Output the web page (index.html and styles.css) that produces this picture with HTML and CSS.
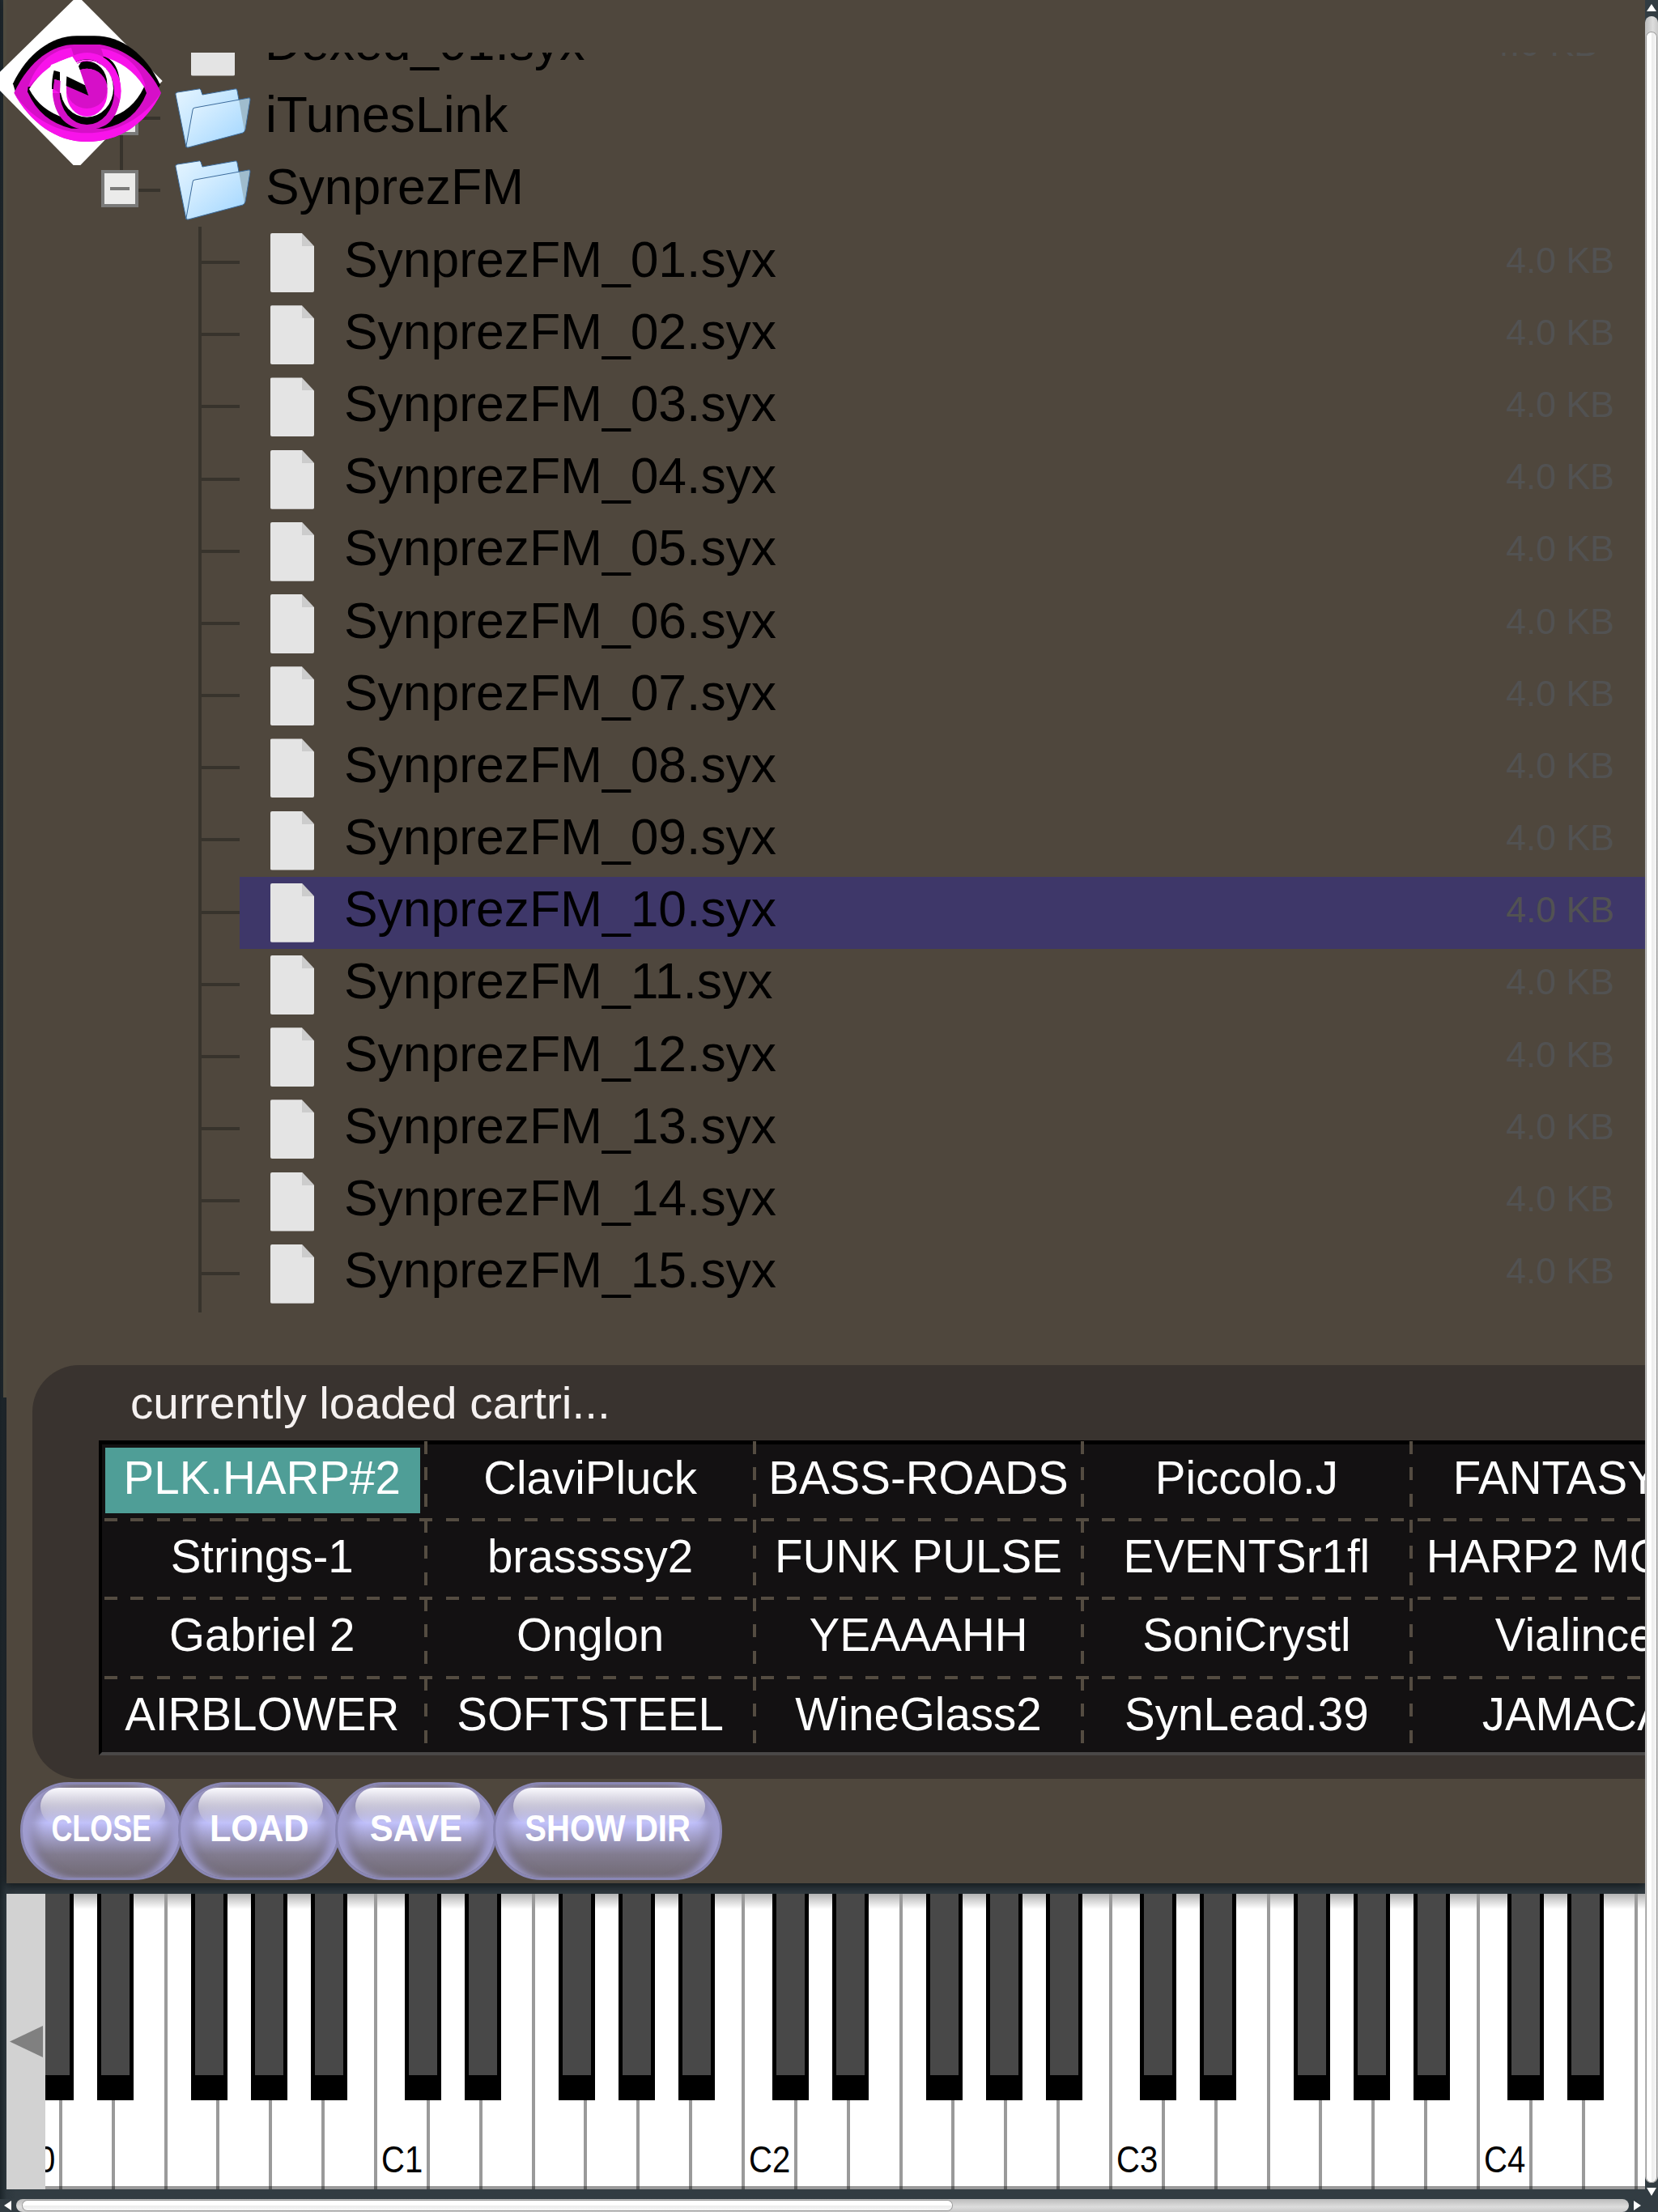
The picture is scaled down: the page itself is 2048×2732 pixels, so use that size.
FILE: index.html
```
<!doctype html>
<html>
<head>
<meta charset="utf-8">
<title>Synprez</title>
<link rel="stylesheet" href="styles.css">
</head>

<body>
<svg width="0" height="0" class="defs">
	<defs>
		<linearGradient id="back" x1="0" y1="0" x2="1" y2="1">
			<stop offset="0" stop-color="#e6f5ff"/><stop offset="1" stop-color="#9fd5ff"/>
		</linearGradient>
		<symbol id="folder" viewBox="0 0 94 74">
			<path d="M1 8Q0 6 3 5L29 1Q31 0 32 2L34 8L74 1Q77 0 77 3L79 14L14 73Z" fill="url(#back)" stroke="#3d6c9c"/>
			<path d="M14 73L22 27Q22 24 25 24L91 12Q93 11 93 14L87 51Q86 54 84 55L17 73Q14 74 14 71Z" fill="#9fbccd"/>
			<path d="M14 73L22 27Q22 24 25 24L79 14L86 53L84 55Z" fill="url(#back)"/>
			<path d="M14 71L22 27Q22 24 25 24L91 12Q93 11 93 14L87 51Q86 54 84 55L17 73Q14 74 14 71Z" fill="none" stroke="#3d6c9c"/>
		</symbol>
	</defs>
</svg>

<div class="screen">
	<div class="main">
		<div class="browser">
			<ul class="tree">
				<li class="top"><i class="file"></i><b>Dexed_01.syx</b><em>4.0 KB</em></li>
				<li class="top dir"><i class="box"></i><svg class="folder"><use href="#folder"/></svg><b>iTunesLink</b></li>
				<li class="top dir last"><i class="box"></i><svg class="folder"><use href="#folder"/></svg><b>SynprezFM</b></li>
				<li><i class="file"></i><b>SynprezFM_01.syx</b><em>4.0 KB</em></li>
				<li><i class="file"></i><b>SynprezFM_02.syx</b><em>4.0 KB</em></li>
				<li><i class="file"></i><b>SynprezFM_03.syx</b><em>4.0 KB</em></li>
				<li><i class="file"></i><b>SynprezFM_04.syx</b><em>4.0 KB</em></li>
				<li><i class="file"></i><b>SynprezFM_05.syx</b><em>4.0 KB</em></li>
				<li><i class="file"></i><b>SynprezFM_06.syx</b><em>4.0 KB</em></li>
				<li><i class="file"></i><b>SynprezFM_07.syx</b><em>4.0 KB</em></li>
				<li><i class="file"></i><b>SynprezFM_08.syx</b><em>4.0 KB</em></li>
				<li><i class="file"></i><b>SynprezFM_09.syx</b><em>4.0 KB</em></li>
				<li class="on"><i class="file"></i><b>SynprezFM_10.syx</b><em>4.0 KB</em></li>
				<li><i class="file"></i><b>SynprezFM_11.syx</b><em>4.0 KB</em></li>
				<li><i class="file"></i><b>SynprezFM_12.syx</b><em>4.0 KB</em></li>
				<li><i class="file"></i><b>SynprezFM_13.syx</b><em>4.0 KB</em></li>
				<li><i class="file"></i><b>SynprezFM_14.syx</b><em>4.0 KB</em></li>
				<li class="end"><i class="file"></i><b>SynprezFM_15.syx</b><em>4.0 KB</em></li>
			</ul>

			<div class="cart">
				<h2><span>currently loaded cartri...</span></h2>
				<div class="grid">
					<div class="row"><span class="cur">PLK.HARP#2</span><span>ClaviPluck</span><span>BASS-ROADS</span><span>Piccolo.J</span><span class="cut1">FANTASY</span></div>
					<div class="row"><span>Strings-1</span><span>brassssy2</span><span>FUNK PULSE</span><span>EVENTSr1fl</span><span class="cut2">HARP2 MO</span></div>
					<div class="row"><span>Gabriel 2</span><span>Onglon</span><span>YEAAAHH</span><span>SoniCrystl</span><span>Vialince</span></div>
					<div class="row"><span>AIRBLOWER</span><span>SOFTSTEEL</span><span>WineGlass2</span><span>SynLead.39</span><span>JAMACA</span></div>
				</div>
			</div>

			<div class="buttons">
				<a href="javascript:;" class="btn close"><span>CLOSE</span></a>
				<a href="javascript:;" class="btn"><span>LOAD</span></a>
				<a href="javascript:;" class="btn"><span>SAVE</span></a>
				<a href="javascript:;" class="btn wide"><span>SHOW DIR</span></a>
			</div>
		</div>

		<div class="keyboard">
			<a href="javascript:;" class="down"><i></i></a>
			<div class="keys">
				<div class="strip">
					<div class="key c"><i></i><u>C0</u></div>
					<div class="key d"><i></i></div>
					<div class="key"></div>
					<div class="key f"><i></i></div>
					<div class="key g"><i></i></div>
					<div class="key a"><i></i></div>
					<div class="key"></div>
					<div class="key c"><i></i><u>C1</u></div>
					<div class="key d"><i></i></div>
					<div class="key"></div>
					<div class="key f"><i></i></div>
					<div class="key g"><i></i></div>
					<div class="key a"><i></i></div>
					<div class="key"></div>
					<div class="key c"><i></i><u>C2</u></div>
					<div class="key d"><i></i></div>
					<div class="key"></div>
					<div class="key f"><i></i></div>
					<div class="key g"><i></i></div>
					<div class="key a"><i></i></div>
					<div class="key"></div>
					<div class="key c"><i></i><u>C3</u></div>
					<div class="key d"><i></i></div>
					<div class="key"></div>
					<div class="key f"><i></i></div>
					<div class="key g"><i></i></div>
					<div class="key a"><i></i></div>
					<div class="key"></div>
					<div class="key c"><i></i><u>C4</u></div>
					<div class="key d"><i></i></div>
					<div class="key"></div>
					<div class="key"></div>
				</div>
			</div>
		</div>
	</div>

	<div class="vbar">
		<svg width="16" height="20"><path d="M2 14L8 5L14 14Z" fill="#fff"/></svg>
		<div class="track"><div class="thumb"></div></div>
		<svg width="16" height="20"><path d="M2 6L14 6L8 16Z" fill="#fff"/></svg>
	</div>
	<div class="hbar">
		<svg width="20" height="16"><path d="M14 2L5 8L14 14Z" fill="#fff"/></svg>
		<div class="track"><div class="thumb"></div></div>
		<svg width="20" height="16"><path d="M6 2L15 8L6 14Z" fill="#fff"/></svg>
	</div>
</div>

<svg class="logo" viewBox="0 0 630 630">
	<path d="M272 0H303L602 300L298 612H272L0 336V266Z" fill="#fff"/>
	<!-- lids -->
	<path d="M48 310C100 200 190 133 285 133H350C450 133 540 200 594 315L570 350H60Z" fill="#000"/>
	<path d="M52 344C110 220 200 165 275 165H370C460 180 550 240 597 344C540 460 440 525 322 525C205 525 110 450 52 344Z" fill="#d60fc8"/>
	<path d="M52 344C110 450 205 525 322 525C440 525 540 460 597 344C530 440 430 493 322 493C215 493 115 440 52 344Z" fill="#f813ea"/>
	<path d="M104 325C130 240 190 185 264 177L275 212Q170 240 104 325Z" fill="#f813ea"/>
	<path d="M375 180C450 190 520 240 540 320L530 315Q480 240 385 212Z" fill="#f813ea"/>
	<path d="M102 340Q150 450 264 476H384Q500 455 543 345L534 322H104Z" fill="#000"/>
	<path d="M108 330Q170 235 270 210H380Q480 235 534 322Q490 415 400 437H240Q150 410 108 330Z" fill="#fff"/>
	<path d="M380 209C430 215 450 280 444 345H415Q415 260 380 209Z" fill="#000"/>
	<!-- iris -->
	<ellipse cx="322" cy="337" rx="127" ry="142" fill="#f813ea"/>
	<path d="M195 330C195 440 260 480 322 480S430 455 444 370L420 345H195Z" fill="#d60fc8"/>
	<ellipse cx="322" cy="341" rx="101" ry="121" fill="#000"/>
	<path d="M221 345A101 121 0 0 1 400 265L322 345Z" fill="#f813ea"/>
	<ellipse cx="322" cy="328" rx="98" ry="106" fill="#fff"/>
	<path d="M280 236Q330 205 380 245L365 232Q320 220 290 240Z" fill="#f813ea"/>
	<ellipse cx="322" cy="310" rx="75" ry="83" fill="#000"/>
	<ellipse cx="322" cy="343" rx="76" ry="89" fill="#f813ea"/>
	<ellipse cx="322" cy="328" rx="76" ry="74" fill="#d60fc8"/>
	<!-- glint -->
	<path d="M268 209L286 236L300 231L291 245L297 262L327 352L247 284L245 318L222 345V300L198 293L194 330L150 320L190 240Z" fill="#fff"/>
	<path d="M200 261L222 267V300L202 294L198 330H192Q192 290 200 261Z" fill="#000"/>
	<path d="M198 330L202 294L224 300L222 345Z" fill="#d60fc8"/>
	<path d="M247 283L315 316L328 354L245 318Z" fill="#000"/>
</svg>
</body>
</html>
```

FILE: styles.css
```
*{
	margin:0; padding:0; list-style:none; box-sizing:border-box;
}
body{
	background:#323c42; overflow:hidden;
	font-family:"Liberation Sans",Arial,sans-serif;
}
a{ text-decoration:none; }
i,b,em,u{ font-style:normal; font-weight:normal; text-decoration:none; }
.defs{ position:absolute; }

.screen{
	width:2048px; height:2732px; display:grid;
	grid-template-columns:2032px 16px; grid-template-rows:2716px 16px;
}
.main{
	overflow:hidden;
	background:linear-gradient(90deg,#1c252a 0,#2d373d 8px,#323c42 20px);
}

/* file browser */
.browser{
	display:flow-root; overflow:hidden;
	height:2326px; margin-left:8px; background:#4f473d;
	box-shadow:-4px -600px 0 #504b3f, 0 2px 12px 2px #12171a;
}
.tree{
	height:1556px; margin-top:65px; overflow:hidden;
}
.tree li{
	height:89.2px; display:flex; align-items:center;
	margin-left:288px; padding-left:38px; position:relative;
}
.tree li:first-child{ margin-top:-52.6px; }
.tree .top{ margin-left:190px; }
.tree .dir{ padding-left:18px; }
.tree .on{ background:#3e3769; }
.tree li:before{
	content:""; position:absolute; left:-49px; top:42px;
	width:49px; height:4px; background:#37332c;
}
.tree li:after{
	content:""; position:absolute; left:-51px; top:0;
	width:4px; height:100%; background:#37332c;
}
.tree .top:after{ left:-50px; }
.tree .last:after{ height:40px; }
.tree .end:after{ height:93px; }
.box{
	position:absolute; left:-73px; top:19px; z-index:1;
	width:46px; height:46px; background:#ebebea; border:4px solid #7a7a79;
}
.box:after{
	content:""; position:absolute; left:7px; top:17px;
	width:24px; height:4px; background:#7a7a79;
}
.file{
	width:54px; height:73px; border-radius:2px; margin-right:37px;
	background:linear-gradient(#ccc,#ccc) right top/15px 16px no-repeat #e4e4e4;
	clip-path:polygon(0 0,39px 0,100% 16px,100% 100%,0 100%);
}
.folder{ width:94px; height:74px; margin-right:18px; }
.tree b{
	font-size:62.4px; line-height:72px; padding-bottom:8px;
}
.tree em{
	margin-left:auto; margin-right:38px; padding-bottom:6px;
	font-size:44.6px; line-height:50px; color:#525252;
}
.tree .top em{ margin-right:58px; }

/* loaded cartridge */
.cart{
	height:511px; margin:65px 0 0 32px; padding-left:82px;
	background:#39332f; border-radius:58px 0 0 58px; overflow:hidden;
}
.cart h2{
	height:93px; padding:14px 0 0 39px;
	font-size:55.5px; line-height:66px; font-weight:normal; color:#f5f1f0;
}
.cart h2 span{
	display:inline-block; transform:scaleX(1.022); transform-origin:0 0;
}
.grid{
	width:2035px; height:389px; border:solid #000; border-width:5px 0 0 4px;
	border-bottom:4px solid #4a4848; background:#131112;
}
.row{
	height:97.2px; margin:0 0 0 -5px; display:flex; position:relative;
}
.row:first-child{ margin-top:-4px; }
.row:after{
	content:""; position:absolute; left:8px; right:0; bottom:-2px; height:4px;
	background:repeating-linear-gradient(90deg,#544c41 0,#544c41 16px,transparent 16px,transparent 32.43px);
}
.row:last-child:after{ display:none; }
.row span{
	width:405.4px; flex:none; text-align:center; position:relative;
	font-size:56.5px; line-height:92px; color:#fff;
}
.row span:after{
	content:""; position:absolute; right:-2px; top:0; width:4px; height:100%;
	background:repeating-linear-gradient(#544c41 0,#544c41 16px,transparent 16px,transparent 32.4px);
}
.row .cur{
	background:linear-gradient(#4f9e97,#4f9e97) 9px 8px/389px 81px no-repeat;
}
.row .cut1{ padding-right:48px; }
.row .cut2{ padding-right:72px; }

.buttons{
	display:flex; padding:4px 0 0 17px;
}
.btn{
	width:200px; height:121px; margin-right:-5.3px; border-radius:60px;
	display:flex; align-items:center; justify-content:center; position:relative;
	border:3px solid #8a87b5;
	background:linear-gradient(#776f78 0,#8c86a0 12%,#c0c0fc 41%,#a5a2cd 55%,#827c90 75%,#716a74 100%);
	box-shadow:inset 14px 0 10px -4px #a09dd0, inset -14px 0 10px -4px #a09dd0, inset 32px 0 14px -14px rgba(105,98,120,.4), inset -32px 0 14px -14px rgba(105,98,120,.4);
}
.btn:before{
	content:""; position:absolute; left:22px; right:18px; top:4px; height:46px;
	border-radius:23px;
	background:linear-gradient(#fbfaff,rgba(215,213,225,.8) 45%,rgba(195,195,245,0));
}
.btn span{
	position:relative; font-size:46px; line-height:60px; font-weight:bold;
	color:#fff; white-space:nowrap; transform:translateY(-4px) scaleX(.94);
}
.close span{ transform:translateY(-4px) scaleX(.78); }
.wide{ width:283px; }
.wide span{ transform:translateY(-4px) scaleX(.87); }

/* piano */
.keyboard{
	height:365px; margin:13px 0 0 8px; display:flex;
}
.down{
	width:48px; flex:none; background:#d2d2d2;
	display:flex; align-items:center; padding-left:4px;
}
.down i{
	width:41px; height:39px; background:#808080;
	clip-path:polygon(0 50%,100% 0,100% 100%);
}
.keys{ flex:1; overflow:hidden; position:relative; }
.keys:after{
	content:""; position:absolute; left:0; right:0; bottom:0; height:4px;
	background:rgba(0,0,0,.4);
}
.strip{ display:flex; margin-left:-48px; height:100%; }
.key{
	width:64.86px; flex:none; position:relative;
	border-left:4px solid #9a9a9a;
	background:linear-gradient(#b4b4b4,#fff 19px);
}
.key i{
	position:absolute; top:0; z-index:2; width:45px; height:255px;
	background:#484848; border:solid #000; border-width:0 5px 31px;
}
.c i{ left:34px; }
.d i{ left:43px; }
.f i{ left:29.4px; }
.g i{ left:38.3px; }
.a i{ left:47.7px; }
.key u{
	position:absolute; left:5px; bottom:11px;
	font-size:46px; line-height:52px; color:#000;
	transform:scaleX(.87); transform-origin:0 0;
}

/* scrollbars */
.vbar{ display:flex; flex-direction:column; }
.vbar .track{
	height:2676px; padding:20px 2px 1px; border-radius:8px;
	background:linear-gradient(90deg,#bbb,#ddd 60%,#c8c8c8);
}
.thumb{
	height:100%; border-radius:6px; background:#fff; box-shadow:0 0 0 1px #999;
}
.vbar .thumb{ background:linear-gradient(90deg,#fff 50%,#ececec 50%,#f6f6f6); }
.hbar{ display:flex; grid-column:1 / 3; }
.hbar .track{
	width:1992px; padding:2px 836px 2px 8px; border-radius:8px;
	background:linear-gradient(#bbb,#ddd 60%,#c8c8c8);
}
.hbar .thumb{ background:linear-gradient(#fff 50%,#ececec 50%,#f6f6f6); }

.logo{
	position:absolute; left:0; top:0; z-index:5; width:210px; height:210px;
}
```
